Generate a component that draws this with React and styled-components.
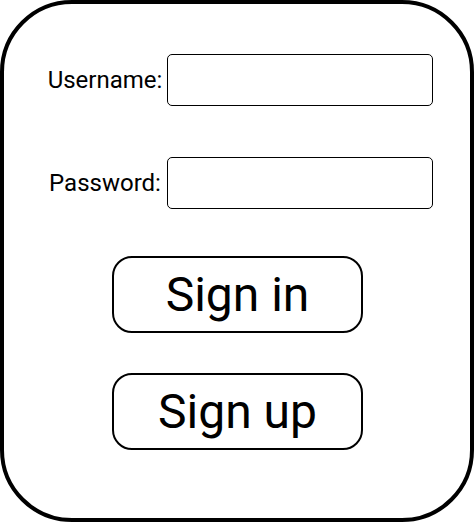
import React from "react";
import styled, { createGlobalStyle } from "styled-components";

const Global = createGlobalStyle`
  html, body { margin: 0; padding: 0; background: #fff; }
  body { font-family: Roboto, "Liberation Sans", Arial, sans-serif; color: #000; }
  * { box-sizing: border-box; }
`;

const Card = styled.div`
  width: 474px;
  height: 522px;
  border: 4px solid #000;
  border-radius: 72px;
  background: #fff;
  padding: 50px 37px 0 41px;
  display: flex;
  flex-direction: column;
`;

const Form = styled.div`
  display: grid;
  grid-template-columns: 120px 266px;
  column-gap: 2px;
  row-gap: 51px;
  align-items: center;
`;

const Label = styled.label`
  font-size: 24px;
  line-height: 28px;
  text-align: center;
  white-space: nowrap;
`;

const Field = styled.input`
  width: 266px;
  height: 52px;
  border: 1px solid #000;
  border-radius: 5px;
  background: #fff;
  padding: 0 10px;
  font-family: inherit;
  font-size: 20px;
  outline: none;
`;

const Actions = styled.div`
  display: flex;
  flex-direction: column;
  align-items: center;
  gap: 40px;
  margin-top: 47px;
  margin-left: -3px;
`;

const Button = styled.button`
  width: 251px;
  height: 77px;
  border: 2px solid #000;
  border-radius: 20px;
  background: #fff;
  color: #000;
  font-family: Roboto, "Liberation Sans", Arial, sans-serif;
  font-size: 48px;
  line-height: 1;
  padding: 0;
  cursor: pointer;
`;

export default function App() {
  return (
    <>
      <Global />
      <Card>
        <Form>
          <Label htmlFor="username">Username:</Label>
          <Field id="username" type="text" />
          <Label htmlFor="password">Password:</Label>
          <Field id="password" type="password" />
        </Form>
        <Actions>
          <Button>Sign in</Button>
          <Button>Sign up</Button>
        </Actions>
      </Card>
    </>
  );
}
